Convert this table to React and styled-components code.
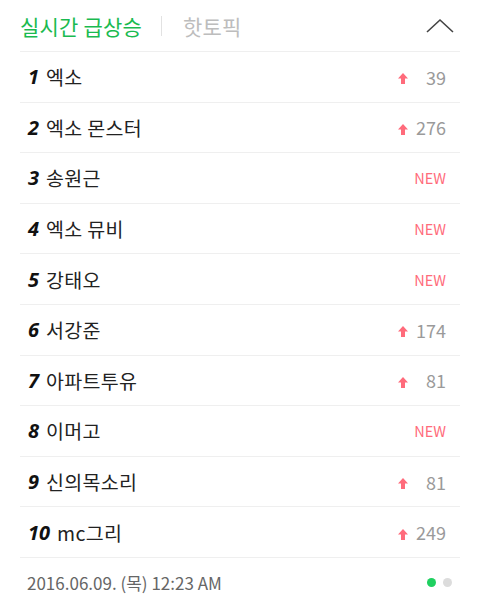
import styled, { createGlobalStyle } from "styled-components"

const GlobalStyle = createGlobalStyle`
  body {
    margin: 0;
    background: #fff;
    font-family: "Noto Sans CJK KR", "Noto Sans", sans-serif;
  }
`

const Panel = styled.div`
  width: 480px;
  padding: 0 20px;
  box-sizing: border-box;
`

const Header = styled.div`
  display: flex;
  align-items: center;
  height: 51px;
  border-bottom: 1px solid #efefef;
`

const Tab = styled.div`
  font-size: 21px;
  color: ${(p) => (p.active ? "#1aba50" : "#bdbdbd")};
  letter-spacing: 0.2px;
`

const Bar = styled.span`
  width: 1px;
  height: 20px;
  background: #e2e2e2;
  margin: 0 21px 0 19px;
`

const Toggle = styled.div`
  margin-left: auto;
  margin-right: 6px;
  display: flex;
`

const List = styled.ol`
  list-style: none;
  margin: 0;
  padding: 0;
`

const Row = styled.li`
  display: flex;
  align-items: center;
  height: 49.6px;
  border-bottom: 1px solid #efefef;
  padding: 0 14px 0 8px;
`

const Rank = styled.span`
  font-family: "Noto Sans", "Liberation Sans", sans-serif;
  font-weight: 700;
  font-style: italic;
  font-size: 20px;
  color: #111;
  margin-right: 7px;
`

const Name = styled.span`
  font-size: 19.5px;
  color: #222;
  letter-spacing: 0.3px;
  flex: 1;
`

const Change = styled.span`
  display: grid;
  grid-template-columns: 10px 38px;
  align-items: center;
  width: 48px;
  font-size: 18px;
  color: #9a9a9a;
  svg {
    margin-top: 4px;
  }
`

const Count = styled.span`
  text-align: right;
`

const New = styled.span`
  font-size: 14.5px;
  color: #ff6b7b;
`

const Footer = styled.div`
  display: flex;
  align-items: center;
  height: 50px;
  padding: 0 8px 0 7px;
`

const Stamp = styled.span`
  font-size: 17px;
  color: #666;
  flex: 1;
`

const Dot = styled.span`
  width: 9px;
  height: 9px;
  border-radius: 50%;
  margin-left: 7px;
  background: ${(p) => (p.on ? "#1fd060" : "#dcdcdc")};
`

const Up = () => (
  <svg width="10" height="11" viewBox="0 0 10 11">
    <path d="M5 0 L10 5.5 L7 5.5 L7 11 L3 11 L3 5.5 L0 5.5 Z" fill="#ff6b7b" />
  </svg>
)

const items = [
  ["엑소", 39],
  ["엑소 몬스터", 276],
  ["송원근", null],
  ["엑소 뮤비", null],
  ["강태오", null],
  ["서강준", 174],
  ["아파트투유", 81],
  ["이머고", null],
  ["신의목소리", 81],
  ["mc그리", 249],
]

export default function App() {
  return (
    <Panel>
      <GlobalStyle />
      <Header>
        <Tab active>실시간 급상승</Tab>
        <Bar />
        <Tab>핫토픽</Tab>
        <Toggle>
          <svg width="28" height="16" viewBox="0 0 28 16">
            <path d="M1 14 L14 2 L27 14" fill="none" stroke="#444" strokeWidth="1.6" />
          </svg>
        </Toggle>
      </Header>
      <List>
        {items.map(([name, n], i) => (
          <Row key={name}>
            <Rank>{i + 1}</Rank>
            <Name>{name}</Name>
            {n === null ? (
              <New>NEW</New>
            ) : (
              <Change>
                <Up />
                <Count>{n}</Count>
              </Change>
            )}
          </Row>
        ))}
      </List>
      <Footer>
        <Stamp>2016.06.09. (목) 12:23 AM</Stamp>
        <Dot on />
        <Dot />
      </Footer>
    </Panel>
  )
}
